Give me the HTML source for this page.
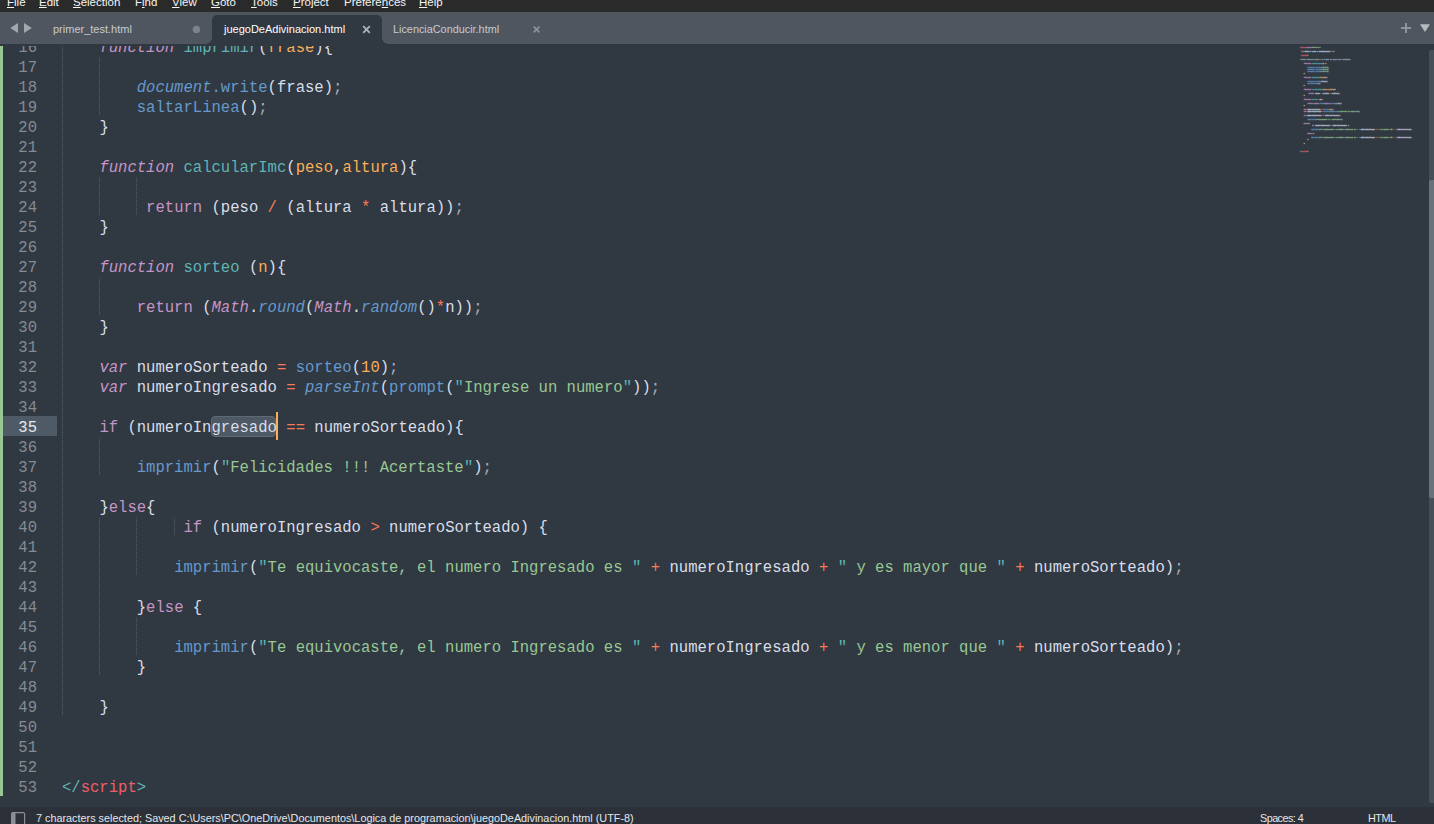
<!DOCTYPE html>
<html lang="es"><head><meta charset="utf-8"><title>juegoDeAdivinacion.html - Sublime Text</title>
<style>
*{margin:0;padding:0;box-sizing:border-box}
html,body{width:1434px;height:824px;overflow:hidden;background:#303841}
body{position:relative;font-family:"Liberation Sans",sans-serif}
#menu{position:absolute;left:0;top:0;width:1434px;height:12px;background:#2a2a2a;overflow:hidden}
#menu span{position:absolute;top:-5.5px;font-size:11.5px;line-height:14px;color:#f4f4f4;white-space:pre}
#menu u{text-decoration:underline;text-decoration-thickness:1px;text-underline-offset:1.4px}
#tabs{position:absolute;left:0;top:12px;width:1434px;height:32px;background:#4f565f}
.tab{position:absolute;top:0;height:32px;font-size:11px;line-height:34px;color:#c6cbd2;white-space:pre}
#act{position:absolute;left:212px;top:3px;width:170px;height:29px;background:#303841;border-radius:5px 5px 0 0}
#act:before,#act:after{content:"";position:absolute;bottom:0;width:6px;height:6px}
#act:before{left:-6px;background:radial-gradient(circle at 0 0,rgba(48,56,65,0) 5.5px,#303841 6px)}
#act:after{right:-6px;background:radial-gradient(circle at 100% 0,rgba(48,56,65,0) 5.5px,#303841 6px)}
#ed{position:absolute;left:0;top:46px;width:1434px;height:761px;background:#303841;overflow:hidden}
#edin{position:absolute;left:0;top:-46px;width:1434px;height:824px}
#green{position:absolute;left:0;top:46px;width:3px;height:750px;background:#99c794}
.ln{position:absolute;left:0;width:37px;height:20px;text-align:right;color:#848b95;font:15.574px/20px "Liberation Mono",monospace;white-space:pre}
.cl{position:absolute;left:0;height:20px;font:15.574px/20px "Liberation Mono",monospace;white-space:pre;color:#d8dee9}
.cl span{position:absolute;top:0}
.gd{position:absolute;width:1px;background:repeating-linear-gradient(to bottom,#545c66 0,#545c66 1px,transparent 1px,transparent 2px)}
.k{color:#c695c6;font-style:italic}.r{color:#c695c6}.pi{color:#c695c6;font-style:italic}
.f{color:#5fb4b4}.p{color:#f9ae58}.b{color:#6699cc}.bi{color:#6699cc;font-style:italic}
.o{color:#f97b58}.s{color:#99c794}.q{color:#5fb4b4}.g{color:#a6acb9}.w{color:#d8dee9}.t{color:#ec5f66}
#gh{position:absolute;left:3px;top:416px;width:54px;height:20px;background:#4e5a65}
.ln.cur{color:#e6eaef}
#mm{position:absolute;left:1300.2px;top:46.0px;width:1200px;height:1100px;transform-origin:0 0;transform:scale(.1,.16);font-weight:bold;opacity:.75}
#mm .cl{font-weight:bold;line-height:12.5px;height:12.5px;-webkit-text-stroke:3px currentColor}
#sel{position:absolute;left:211px;top:416px;width:65px;height:21px;background:#4d5965;border:1px solid #5d6975;border-radius:4px}
#caret{position:absolute;left:276px;top:412px;width:2px;height:28px;background:#f9ae58}
#sbt{position:absolute;left:1429px;top:50px;width:8px;height:753px;background:#464e57;border-radius:2px}
#sbh{position:absolute;left:1429px;top:180px;width:8px;height:318px;background:#6b717b;border-radius:2px}
#status{position:absolute;left:0;top:807px;width:1434px;height:17px;background:#2c3038;overflow:hidden}
#status span{position:absolute;top:4px;font-size:10.83px;line-height:14px;color:#e4e7eb;white-space:pre}
</style></head>
<body>
<div id="ed"><div id="edin">
<div id="gh"></div>
<div id="sel"></div>
<i class="gd" style="left:62px;top:38px;height:678px"></i>
<i class="gd" style="left:99px;top:58px;height:58px"></i>
<i class="gd" style="left:99px;top:178px;height:38px"></i>
<i class="gd" style="left:136px;top:178px;height:38px"></i>
<i class="gd" style="left:99px;top:278px;height:38px"></i>
<i class="gd" style="left:99px;top:438px;height:38px"></i>
<i class="gd" style="left:99px;top:518px;height:158px"></i>
<i class="gd" style="left:136px;top:518px;height:58px"></i>
<i class="gd" style="left:174px;top:518px;height:18px"></i>
<i class="gd" style="left:136px;top:618px;height:38px"></i>
<div class="ln" style="top:38px">16</div>
<div class="cl" style="top:38px"><span class="k" style="left:99.38px">function</span><span class="f" style="left:183.50px">imprimir</span><span class="w" style="left:258.27px">(</span><span class="p" style="left:267.61px">frase</span><span class="w" style="left:314.34px">){</span></div>
<div class="ln" style="top:58px">17</div>
<div class="ln" style="top:78px">18</div>
<div class="cl" style="top:78px"><span class="bi" style="left:136.77px">document</span><span class="b" style="left:211.54px">.write</span><span class="w" style="left:267.61px">(frase)</span><span class="g" style="left:333.03px">;</span></div>
<div class="ln" style="top:98px">19</div>
<div class="cl" style="top:98px"><span class="b" style="left:136.77px">saltarLinea</span><span class="w" style="left:239.57px">()</span><span class="g" style="left:258.27px">;</span></div>
<div class="ln" style="top:118px">20</div>
<div class="cl" style="top:118px"><span class="w" style="left:99.38px">}</span></div>
<div class="ln" style="top:138px">21</div>
<div class="ln" style="top:158px">22</div>
<div class="cl" style="top:158px"><span class="k" style="left:99.38px">function</span><span class="f" style="left:183.50px">calcularImc</span><span class="w" style="left:286.30px">(</span><span class="p" style="left:295.65px">peso</span><span class="w" style="left:333.03px">,</span><span class="p" style="left:342.38px">altura</span><span class="w" style="left:398.46px">){</span></div>
<div class="ln" style="top:178px">23</div>
<div class="ln" style="top:198px">24</div>
<div class="cl" style="top:198px"><span class="r" style="left:146.11px">return</span><span class="w" style="left:211.54px">(peso</span><span class="o" style="left:267.61px">/</span><span class="w" style="left:286.30px">(altura</span><span class="o" style="left:361.07px">*</span><span class="w" style="left:379.76px">altura))</span><span class="g" style="left:454.53px">;</span></div>
<div class="ln" style="top:218px">25</div>
<div class="cl" style="top:218px"><span class="w" style="left:99.38px">}</span></div>
<div class="ln" style="top:238px">26</div>
<div class="ln" style="top:258px">27</div>
<div class="cl" style="top:258px"><span class="k" style="left:99.38px">function</span><span class="f" style="left:183.50px">sorteo</span><span class="w" style="left:248.92px">(</span><span class="p" style="left:258.27px">n</span><span class="w" style="left:267.61px">){</span></div>
<div class="ln" style="top:278px">28</div>
<div class="ln" style="top:298px">29</div>
<div class="cl" style="top:298px"><span class="r" style="left:136.77px">return</span><span class="w" style="left:202.19px">(</span><span class="pi" style="left:211.54px">Math</span><span class="w" style="left:248.92px">.</span><span class="bi" style="left:258.27px">round</span><span class="w" style="left:305.00px">(</span><span class="pi" style="left:314.34px">Math</span><span class="w" style="left:351.73px">.</span><span class="bi" style="left:361.07px">random</span><span class="w" style="left:417.15px">()</span><span class="o" style="left:435.84px">*</span><span class="w" style="left:445.19px">n))</span><span class="g" style="left:473.22px">;</span></div>
<div class="ln" style="top:318px">30</div>
<div class="cl" style="top:318px"><span class="w" style="left:99.38px">}</span></div>
<div class="ln" style="top:338px">31</div>
<div class="ln" style="top:358px">32</div>
<div class="cl" style="top:358px"><span class="k" style="left:99.38px">var</span><span class="w" style="left:136.77px">numeroSorteado</span><span class="o" style="left:276.96px">=</span><span class="b" style="left:295.65px">sorteo</span><span class="w" style="left:351.73px">(</span><span class="p" style="left:361.07px">10</span><span class="w" style="left:379.76px">)</span><span class="g" style="left:389.11px">;</span></div>
<div class="ln" style="top:378px">33</div>
<div class="cl" style="top:378px"><span class="k" style="left:99.38px">var</span><span class="w" style="left:136.77px">numeroIngresado</span><span class="o" style="left:286.30px">=</span><span class="bi" style="left:305.00px">parseInt</span><span class="w" style="left:379.76px">(</span><span class="b" style="left:389.11px">prompt</span><span class="w" style="left:445.19px">(</span><span class="q" style="left:454.53px">"</span><span class="s" style="left:463.88px">Ingrese un numero</span><span class="q" style="left:622.76px">"</span><span class="w" style="left:632.11px">))</span><span class="g" style="left:650.80px">;</span></div>
<div class="ln" style="top:398px">34</div>
<div class="ln cur" style="top:418px">35</div>
<div class="cl" style="top:418px"><span class="r" style="left:99.38px">if</span><span class="w" style="left:127.42px">(numeroIngresado</span><span class="o" style="left:286.30px">==</span><span class="w" style="left:314.34px">numeroSorteado){</span></div>
<div class="ln" style="top:438px">36</div>
<div class="ln" style="top:458px">37</div>
<div class="cl" style="top:458px"><span class="b" style="left:136.77px">imprimir</span><span class="w" style="left:211.54px">(</span><span class="q" style="left:220.88px">"</span><span class="s" style="left:230.23px">Felicidades !!! Acertaste</span><span class="q" style="left:463.88px">"</span><span class="w" style="left:473.22px">)</span><span class="g" style="left:482.57px">;</span></div>
<div class="ln" style="top:478px">38</div>
<div class="ln" style="top:498px">39</div>
<div class="cl" style="top:498px"><span class="w" style="left:99.38px">}</span><span class="r" style="left:108.73px">else</span><span class="w" style="left:146.11px">{</span></div>
<div class="ln" style="top:518px">40</div>
<div class="cl" style="top:518px"><span class="r" style="left:183.50px">if</span><span class="w" style="left:211.54px">(numeroIngresado</span><span class="o" style="left:370.42px">&gt;</span><span class="w" style="left:389.11px">numeroSorteado) {</span></div>
<div class="ln" style="top:538px">41</div>
<div class="ln" style="top:558px">42</div>
<div class="cl" style="top:558px"><span class="b" style="left:174.15px">imprimir</span><span class="w" style="left:248.92px">(</span><span class="q" style="left:258.27px">"</span><span class="s" style="left:267.61px">Te equivocaste, el numero Ingresado es </span><span class="q" style="left:632.11px">"</span><span class="o" style="left:650.80px">+</span><span class="w" style="left:669.49px">numeroIngresado</span><span class="o" style="left:819.03px">+</span><span class="q" style="left:837.72px">"</span><span class="s" style="left:847.06px"> y es mayor que </span><span class="q" style="left:996.60px">"</span><span class="o" style="left:1015.29px">+</span><span class="w" style="left:1033.98px">numeroSorteado)</span><span class="g" style="left:1174.17px">;</span></div>
<div class="ln" style="top:578px">43</div>
<div class="ln" style="top:598px">44</div>
<div class="cl" style="top:598px"><span class="w" style="left:136.77px">}</span><span class="r" style="left:146.11px">else</span><span class="w" style="left:192.84px">{</span></div>
<div class="ln" style="top:618px">45</div>
<div class="ln" style="top:638px">46</div>
<div class="cl" style="top:638px"><span class="b" style="left:174.15px">imprimir</span><span class="w" style="left:248.92px">(</span><span class="q" style="left:258.27px">"</span><span class="s" style="left:267.61px">Te equivocaste, el numero Ingresado es </span><span class="q" style="left:632.11px">"</span><span class="o" style="left:650.80px">+</span><span class="w" style="left:669.49px">numeroIngresado</span><span class="o" style="left:819.03px">+</span><span class="q" style="left:837.72px">"</span><span class="s" style="left:847.06px"> y es menor que </span><span class="q" style="left:996.60px">"</span><span class="o" style="left:1015.29px">+</span><span class="w" style="left:1033.98px">numeroSorteado)</span><span class="g" style="left:1174.17px">;</span></div>
<div class="ln" style="top:658px">47</div>
<div class="cl" style="top:658px"><span class="w" style="left:136.77px">}</span></div>
<div class="ln" style="top:678px">48</div>
<div class="ln" style="top:698px">49</div>
<div class="cl" style="top:698px"><span class="w" style="left:99.38px">}</span></div>
<div class="ln" style="top:718px">50</div>
<div class="ln" style="top:738px">51</div>
<div class="ln" style="top:758px">52</div>
<div class="ln" style="top:778px">53</div>
<div class="cl" style="top:778px"><span class="q" style="left:62.00px">&lt;/</span><span class="t" style="left:80.69px">script</span><span class="q" style="left:136.77px">&gt;</span></div>
<div id="caret"></div>
<div id="green"></div>
<div id="mm"><div class="cl" style="top:0.0px"><span class="q" style="left:0.00px">&lt;</span><span class="t" style="left:9.35px">meta</span><span class="k" style="left:56.08px">charset</span><span class="w" style="left:121.50px">=</span><span class="s" style="left:130.84px">"UTF-8"</span><span class="q" style="left:196.27px">&gt;</span></div>
<div class="cl" style="top:25.0px"><span class="q" style="left:9.35px">&lt;</span><span class="t" style="left:18.69px">h1</span><span class="q" style="left:37.38px">&gt;</span><span class="w" style="left:46.73px">Texto y algo a continuacion</span><span class="q" style="left:299.07px">&lt;/</span><span class="t" style="left:317.76px">h1</span><span class="q" style="left:336.46px">&gt;</span></div>
<div class="cl" style="top:50.0px"><span class="q" style="left:9.35px">&lt;</span><span class="t" style="left:18.69px">script</span><span class="q" style="left:74.77px">&gt;</span></div>
<div class="cl" style="top:75.0px"><span class="g" style="left:0.00px">//esta funcion salta a la linea de abajo del documento</span></div>
<div class="cl" style="top:100.0px"><span class="k" style="left:37.38px">function</span><span class="f" style="left:121.50px">saltarLinea</span><span class="w" style="left:224.30px">()</span><span class="w" style="left:252.34px">{</span></div>
<div class="cl" style="top:125.0px"><span class="bi" style="left:74.77px">document</span><span class="b" style="left:149.54px">.write</span><span class="w" style="left:205.61px">(</span><span class="s" style="left:214.96px">"&lt;br&gt;"</span><span class="w" style="left:271.03px">)</span><span class="g" style="left:280.38px">;</span></div>
<div class="cl" style="top:137.5px"><span class="bi" style="left:74.77px">document</span><span class="b" style="left:149.54px">.write</span><span class="w" style="left:205.61px">(</span><span class="s" style="left:214.96px">"&lt;br&gt;"</span><span class="w" style="left:271.03px">)</span><span class="g" style="left:280.38px">;</span></div>
<div class="cl" style="top:150.0px"><span class="bi" style="left:74.77px">document</span><span class="b" style="left:149.54px">.write</span><span class="w" style="left:205.61px">(</span><span class="s" style="left:214.96px">"&lt;br&gt;"</span><span class="w" style="left:271.03px">)</span><span class="g" style="left:280.38px">;</span></div>
<div class="cl" style="top:162.5px"><span class="w" style="left:37.38px">}</span></div>
<div class="cl" style="top:187.5px"><span class="k" style="left:37.38px">function</span><span class="f" style="left:121.50px">imprimir</span><span class="w" style="left:196.27px">(</span><span class="p" style="left:205.61px">frase</span><span class="w" style="left:252.34px">){</span></div>
<div class="cl" style="top:212.5px"><span class="bi" style="left:74.77px">document</span><span class="b" style="left:149.54px">.write</span><span class="w" style="left:205.61px">(frase)</span><span class="g" style="left:271.03px">;</span></div>
<div class="cl" style="top:225.0px"><span class="b" style="left:74.77px">saltarLinea</span><span class="w" style="left:177.57px">()</span><span class="g" style="left:196.27px">;</span></div>
<div class="cl" style="top:237.5px"><span class="w" style="left:37.38px">}</span></div>
<div class="cl" style="top:262.5px"><span class="k" style="left:37.38px">function</span><span class="f" style="left:121.50px">calcularImc</span><span class="w" style="left:224.30px">(</span><span class="p" style="left:233.65px">peso</span><span class="w" style="left:271.03px">,</span><span class="p" style="left:280.38px">altura</span><span class="w" style="left:336.46px">){</span></div>
<div class="cl" style="top:287.5px"><span class="r" style="left:84.11px">return</span><span class="w" style="left:149.54px">(peso</span><span class="o" style="left:205.61px">/</span><span class="w" style="left:224.30px">(altura</span><span class="o" style="left:299.07px">*</span><span class="w" style="left:317.76px">altura))</span><span class="g" style="left:392.53px">;</span></div>
<div class="cl" style="top:300.0px"><span class="w" style="left:37.38px">}</span></div>
<div class="cl" style="top:325.0px"><span class="k" style="left:37.38px">function</span><span class="f" style="left:121.50px">sorteo</span><span class="w" style="left:186.92px">(</span><span class="p" style="left:196.27px">n</span><span class="w" style="left:205.61px">){</span></div>
<div class="cl" style="top:350.0px"><span class="r" style="left:74.77px">return</span><span class="w" style="left:140.19px">(</span><span class="pi" style="left:149.54px">Math</span><span class="w" style="left:186.92px">.</span><span class="bi" style="left:196.27px">round</span><span class="w" style="left:243.00px">(</span><span class="pi" style="left:252.34px">Math</span><span class="w" style="left:289.73px">.</span><span class="bi" style="left:299.07px">random</span><span class="w" style="left:355.15px">()</span><span class="o" style="left:373.84px">*</span><span class="w" style="left:383.19px">n))</span><span class="g" style="left:411.22px">;</span></div>
<div class="cl" style="top:362.5px"><span class="w" style="left:37.38px">}</span></div>
<div class="cl" style="top:387.5px"><span class="k" style="left:37.38px">var</span><span class="w" style="left:74.77px">numeroSorteado</span><span class="o" style="left:214.96px">=</span><span class="b" style="left:233.65px">sorteo</span><span class="w" style="left:289.73px">(</span><span class="p" style="left:299.07px">10</span><span class="w" style="left:317.76px">)</span><span class="g" style="left:327.11px">;</span></div>
<div class="cl" style="top:400.0px"><span class="k" style="left:37.38px">var</span><span class="w" style="left:74.77px">numeroIngresado</span><span class="o" style="left:224.30px">=</span><span class="bi" style="left:243.00px">parseInt</span><span class="w" style="left:317.76px">(</span><span class="b" style="left:327.11px">prompt</span><span class="w" style="left:383.19px">(</span><span class="q" style="left:392.53px">"</span><span class="s" style="left:401.88px">Ingrese un numero</span><span class="q" style="left:560.76px">"</span><span class="w" style="left:570.11px">))</span><span class="g" style="left:588.80px">;</span></div>
<div class="cl" style="top:425.0px"><span class="r" style="left:37.38px">if</span><span class="w" style="left:65.42px">(numeroIngresado</span><span class="o" style="left:224.30px">==</span><span class="w" style="left:252.34px">numeroSorteado){</span></div>
<div class="cl" style="top:450.0px"><span class="b" style="left:74.77px">imprimir</span><span class="w" style="left:149.54px">(</span><span class="q" style="left:158.88px">"</span><span class="s" style="left:168.23px">Felicidades !!! Acertaste</span><span class="q" style="left:401.88px">"</span><span class="w" style="left:411.22px">)</span><span class="g" style="left:420.57px">;</span></div>
<div class="cl" style="top:475.0px"><span class="w" style="left:37.38px">}</span><span class="r" style="left:46.73px">else</span><span class="w" style="left:84.11px">{</span></div>
<div class="cl" style="top:487.5px"><span class="r" style="left:121.50px">if</span><span class="w" style="left:149.54px">(numeroIngresado</span><span class="o" style="left:308.42px">&gt;</span><span class="w" style="left:327.11px">numeroSorteado) {</span></div>
<div class="cl" style="top:512.5px"><span class="b" style="left:112.15px">imprimir</span><span class="w" style="left:186.92px">(</span><span class="q" style="left:196.27px">"</span><span class="s" style="left:205.61px">Te equivocaste, el numero Ingresado es </span><span class="q" style="left:570.11px">"</span><span class="o" style="left:588.80px">+</span><span class="w" style="left:607.49px">numeroIngresado</span><span class="o" style="left:757.03px">+</span><span class="q" style="left:775.72px">"</span><span class="s" style="left:785.06px"> y es mayor que </span><span class="q" style="left:934.60px">"</span><span class="o" style="left:953.29px">+</span><span class="w" style="left:971.98px">numeroSorteado)</span><span class="g" style="left:1112.17px">;</span></div>
<div class="cl" style="top:537.5px"><span class="w" style="left:74.77px">}</span><span class="r" style="left:84.11px">else</span><span class="w" style="left:130.84px">{</span></div>
<div class="cl" style="top:562.5px"><span class="b" style="left:112.15px">imprimir</span><span class="w" style="left:186.92px">(</span><span class="q" style="left:196.27px">"</span><span class="s" style="left:205.61px">Te equivocaste, el numero Ingresado es </span><span class="q" style="left:570.11px">"</span><span class="o" style="left:588.80px">+</span><span class="w" style="left:607.49px">numeroIngresado</span><span class="o" style="left:757.03px">+</span><span class="q" style="left:775.72px">"</span><span class="s" style="left:785.06px"> y es menor que </span><span class="q" style="left:934.60px">"</span><span class="o" style="left:953.29px">+</span><span class="w" style="left:971.98px">numeroSorteado)</span><span class="g" style="left:1112.17px">;</span></div>
<div class="cl" style="top:575.0px"><span class="w" style="left:74.77px">}</span></div>
<div class="cl" style="top:600.0px"><span class="w" style="left:37.38px">}</span></div>
<div class="cl" style="top:650.0px"><span class="q" style="left:0.00px">&lt;/</span><span class="t" style="left:18.69px">script</span><span class="q" style="left:74.77px">&gt;</span></div></div>
<div id="sbt"></div><div id="sbh"></div>
</div></div>
<div id="menu">
<span style="left:7px"><u>F</u>ile</span><span style="left:39px"><u>E</u>dit</span><span style="left:73px"><u>S</u>election</span><span style="left:135px">F<u>i</u>nd</span><span style="left:172px"><u>V</u>iew</span><span style="left:211px"><u>G</u>oto</span><span style="left:251px"><u>T</u>ools</span><span style="left:293px"><u>P</u>roject</span><span style="left:344px">Prefere<u>n</u>ces</span><span style="left:419px"><u>H</u>elp</span>
</div>
<div id="tabs">
<svg style="position:absolute;left:0;top:0" width="1434" height="32" viewBox="0 0 1434 32">
<path d="M18 11 L18 21 L10.3 16 Z" fill="#a3a8ae"/><path d="M24 11 L24 21 L31.8 16 Z" fill="#a3a8ae"/>
<circle cx="196.4" cy="17.4" r="3.7" fill="#7c838b"/>
<path d="M1401 16 H1411 M1406 11 V21" stroke="#8e949b" stroke-width="2" fill="none"/>
<path d="M1420 12.2 H1430 L1425 20 Z" fill="#b7babe"/>
<path d="M533.7 14.7 l5.7 5.7 m0 -5.7 l-5.7 5.7" stroke="#8b9098" stroke-width="1.8" fill="none"/>
</svg>
<div id="act"></div>
<svg style="position:absolute;left:0;top:0" width="1434" height="32" viewBox="0 0 1434 32">
<path d="M363.2 14.2 l6.6 6.6 m0 -6.6 l-6.6 6.6" stroke="#aab0b6" stroke-width="1.9" fill="none"/>
</svg>
<div class="tab" style="left:53px">primer_test.html</div>
<div class="tab" style="left:224px;color:#fff">juegoDeAdivinacion.html</div>
<div class="tab" style="left:393px;font-size:10.85px">LicenciaConducir.html</div>
</div>
<div id="status">
<svg style="position:absolute;left:0;top:0" width="40" height="17" viewBox="0 0 40 17"><rect x="11.6" y="5.6" width="13" height="14" rx="1.6" fill="none" stroke="#8a8e95" stroke-width="1.2"/><path d="M11.2 7 Q11.2 5.2 13 5.2 H15.5 V20 H11.2 Z" fill="#8a8e95"/></svg>
<span style="left:36px">7 characters selected; Saved C:\Users\PC\OneDrive\Documentos\Logica de programacion\juegoDeAdivinacion.html (UTF-8)</span>
<span style="left:1260px;letter-spacing:-0.55px">Spaces: 4</span>
<span style="left:1368px;letter-spacing:-0.5px">HTML</span>
</div>
</body></html>
